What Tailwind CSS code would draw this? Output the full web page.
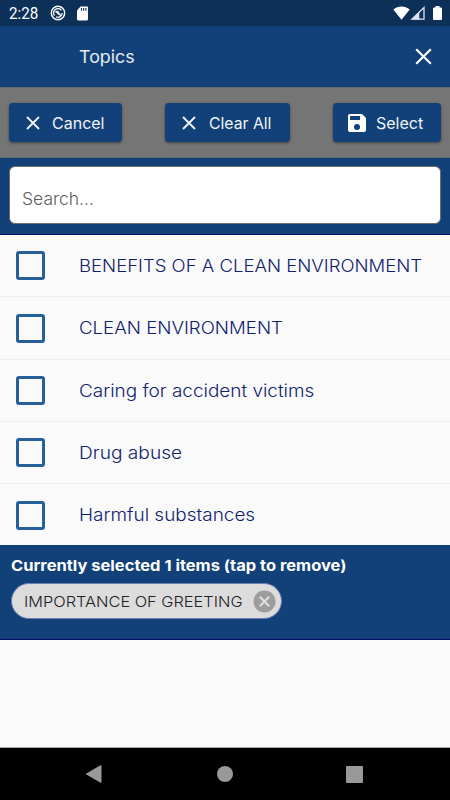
<!DOCTYPE html>
<html lang="en">
<head>
<meta charset="utf-8">
<title>Topics</title>
<script src="https://cdn.jsdelivr.net/npm/@tailwindcss/browser@4"></script>
</head>
<body class="w-[450px] h-[800px] overflow-hidden bg-[#fafafa] font-[Inter,sans-serif] flex flex-col whitespace-nowrap">
  <div class="h-[26px] shrink-0 bg-[#0c3058] flex items-center pl-[9px] pr-[8px] text-white">
    <span class="font-[Roboto,sans-serif] text-[16px] leading-none pt-[2px] w-[41px]"><span class="inline-block origin-left scale-x-95">2:28</span></span>
    <svg class="w-4 h-4" viewBox="0 0 16 16" fill="none" stroke="currentColor"><circle cx="8" cy="8" r="6.7" stroke-width="1.4"/><path d="M4.500 10.600A4.300 4.300 0 0 1 11.400 5.300M12.200 8A4.300 4.300 0 0 1 6.200 11.900" stroke-width="1.300"/><path d="M5.300 6.600l2.600-.6 3.300 4.900-3.400-1.800z" fill="currentColor" stroke-width=".6"/></svg>
    <svg class="ml-[10px] w-[13px] h-[15px]" viewBox="0 0 13 15"><path fill="currentColor" d="M4.500.5h6.400c.7 0 1.100.5 1.100 1.100v11.700c0 .7-.5 1.200-1.100 1.200H2.200c-.7 0-1.200-.5-1.200-1.200V4.500z"/><path stroke="#0c3058" stroke-width="1.100" d="M5.500 2v2.700M7.700 2v2.700M9.900 2v2.700"/></svg>
    <svg class="ml-auto w-[17px] h-[14px]" viewBox="0 0 17 14"><path fill="currentColor" d="M.3 3.500C5-.4 12-.4 16.700 3.500L8.500 13.700z"/></svg>
    <svg class="mr-[8px] w-[15px] h-[14px]" viewBox="0 0 15 14"><path fill="none" stroke="#dfe3ef" stroke-width="1.300" d="M2 13.200H14V1.600z"/><path fill="#dfe3ef" d="M2 13.500L9.500 5.500v8z"/><path fill="#0c3058" d="M9.500 7v5h3.500V4z"/></svg>
    <svg class="w-[9px] h-[14px]" viewBox="0 0 9 14"><path fill="currentColor" d="M2.500 0h4v1.500H8q1 0 1 1V13q0 1-1 1H1q-1 0-1-1V2.500q0-1 1-1h1.500z"/></svg>
  </div>
  <header class="h-[61px] shrink-0 bg-[#114178] flex items-center justify-between pl-[79px] pr-[18px] text-white">
    <h1 class="text-[17px] pt-[2px] text-[#e7ecf2]"><span class="inline-block origin-left scale-x-105">Topics</span></h1>
    <svg class="w-[17px] h-[17px]" viewBox="0 0 17 17"><path stroke="currentColor" stroke-width="2.200" d="M1.200 1.200l14.600 14.600M15.800 1.200L1.200 15.800"/></svg>
  </header>
  <div class="h-[71px] shrink-0 bg-[#757575] border-y border-[#656b73] flex items-center justify-between px-[9px] text-[#f0f3f7] text-[16px]">
    <button class="w-[113px] h-[39px] rounded-[4px] bg-[#114178] shadow-[0_1px_3px_rgba(0,0,0,.45)] flex items-center pl-[17px]">
      <svg class="w-[14px] h-[14px] mr-[12px]" viewBox="0 0 14 14"><path stroke="currentColor" stroke-width="1.900" d="M1 1l12 12M13 1L1 13"/></svg><span>Cancel</span>
    </button>
    <button class="w-[125px] h-[39px] rounded-[4px] bg-[#114178] shadow-[0_1px_3px_rgba(0,0,0,.45)] flex items-center pl-[17px]">
      <svg class="w-[14px] h-[14px] mr-[13px]" viewBox="0 0 14 14"><path stroke="currentColor" stroke-width="1.900" d="M1 1l12 12M13 1L1 13"/></svg><span class="origin-left scale-x-[.985]">Clear All</span>
    </button>
    <button class="w-[108px] h-[39px] rounded-[4px] bg-[#114178] shadow-[0_1px_3px_rgba(0,0,0,.45)] flex items-center pl-[15px]">
      <svg class="w-[18px] h-[18px] mr-[10px]" viewBox="3 3 18 18"><path fill="#fff" d="M17 3H5a2 2 0 0 0-2 2v14a2 2 0 0 0 2 2h14a2 2 0 0 0 2-2V7zM12 19a3 3 0 1 1 0-6 3 3 0 0 1 0 6zM15 9H5V5h10z"/></svg><span>Select</span>
    </button>
  </div>
  <div class="h-[77px] shrink-0 bg-[#114178] border-b border-[#000f6b] pt-[8px] px-[9px]">
    <div class="h-[58px] rounded-[6px] border border-[#6d6d6d] bg-white flex items-center pl-[12px] pt-[10px] text-[17px] text-[#5c5c5c]"><span class="inline-block origin-left scale-x-[1.03] font-light">Search...</span></div>
  </div>
  <ul class="h-[310px] shrink-0 flex flex-col text-[17px] text-[#10226f] font-light">
    <li class="h-[62px] shrink-0 border-b border-[#eeeeee] flex items-center pl-[16px]"><span class="w-[29px] h-[29px] border-[3px] border-[#25609b] rounded-[3px] mr-[34px]"></span><span class="origin-left scale-x-[1.09] pt-[2px]">BENEFITS OF A CLEAN ENVIRONMENT</span></li>
    <li class="h-[63px] shrink-0 border-b border-[#eeeeee] flex items-center pl-[16px]"><span class="w-[29px] h-[29px] border-[3px] border-[#25609b] rounded-[3px] mr-[34px]"></span><span class="origin-left scale-x-[1.097] pt-[2px]">CLEAN ENVIRONMENT</span></li>
    <li class="h-[62px] shrink-0 border-b border-[#eeeeee] flex items-center pl-[16px]"><span class="w-[29px] h-[29px] border-[3px] border-[#25609b] rounded-[3px] mr-[34px]"></span><span class="origin-left scale-x-[1.114] pt-[3px]">Caring for accident victims</span></li>
    <li class="h-[62px] shrink-0 border-b border-[#eeeeee] flex items-center pl-[16px]"><span class="w-[29px] h-[29px] border-[3px] border-[#25609b] rounded-[3px] mr-[34px]"></span><span class="origin-left scale-x-[1.126] pt-[3px]">Drug abuse</span></li>
    <li class="h-[61px] shrink-0 flex items-center pl-[16px] pt-px"><span class="w-[29px] h-[29px] border-[3px] border-[#25609b] rounded-[3px] mr-[34px]"></span><span class="origin-left scale-x-[1.114] pt-[2px]">Harmful substances</span></li>
  </ul>
  <section class="h-[95px] shrink-0 bg-[#114178] border-b border-[#000f6b] pl-[11px] pt-[11px]">
    <p class="text-[15px] leading-[20px] font-bold text-white"><span class="inline-block origin-left scale-x-[1.1]">Currently selected 1 items (tap to remove)</span></p>
    <div class="mt-[7px] w-[271px] h-[36px] rounded-full bg-[#dcdcdc] border border-[#6d7fb0] flex items-center pl-[12px] pr-[5px] justify-between text-[15px] text-[#222]">
      <span class="font-light origin-left scale-x-[1.09] pt-[2px]">IMPORTANCE OF GREETING</span>
      <svg class="w-[23px] h-[23px] shrink-0" viewBox="0 0 23 23"><circle cx="11.500" cy="11.500" r="11" fill="#9d9d9d"/><path stroke="#dedede" stroke-width="2.200" d="M6.800 6.800l9.400 9.400M16.200 6.800l-9.400 9.400"/></svg>
    </div>
  </section>
  <main class="grow"></main>
  <nav class="h-[53px] shrink-0 bg-black border-t border-[#a8a8a8] flex items-center justify-between pl-[85px] pr-[87px]">
    <svg class="w-[17px] h-[18px]" viewBox="0 0 17 18"><path fill="#999" d="M.5 9L15.500.3q1-.4 1 .7v16q0 1-1 .7z"/></svg>
    <span class="w-4 h-4 rounded-full bg-[#999] ml-px"></span>
    <span class="w-[17px] h-[17px] rounded-[1px] bg-[#999]"></span>
  </nav>
</body>
</html>
